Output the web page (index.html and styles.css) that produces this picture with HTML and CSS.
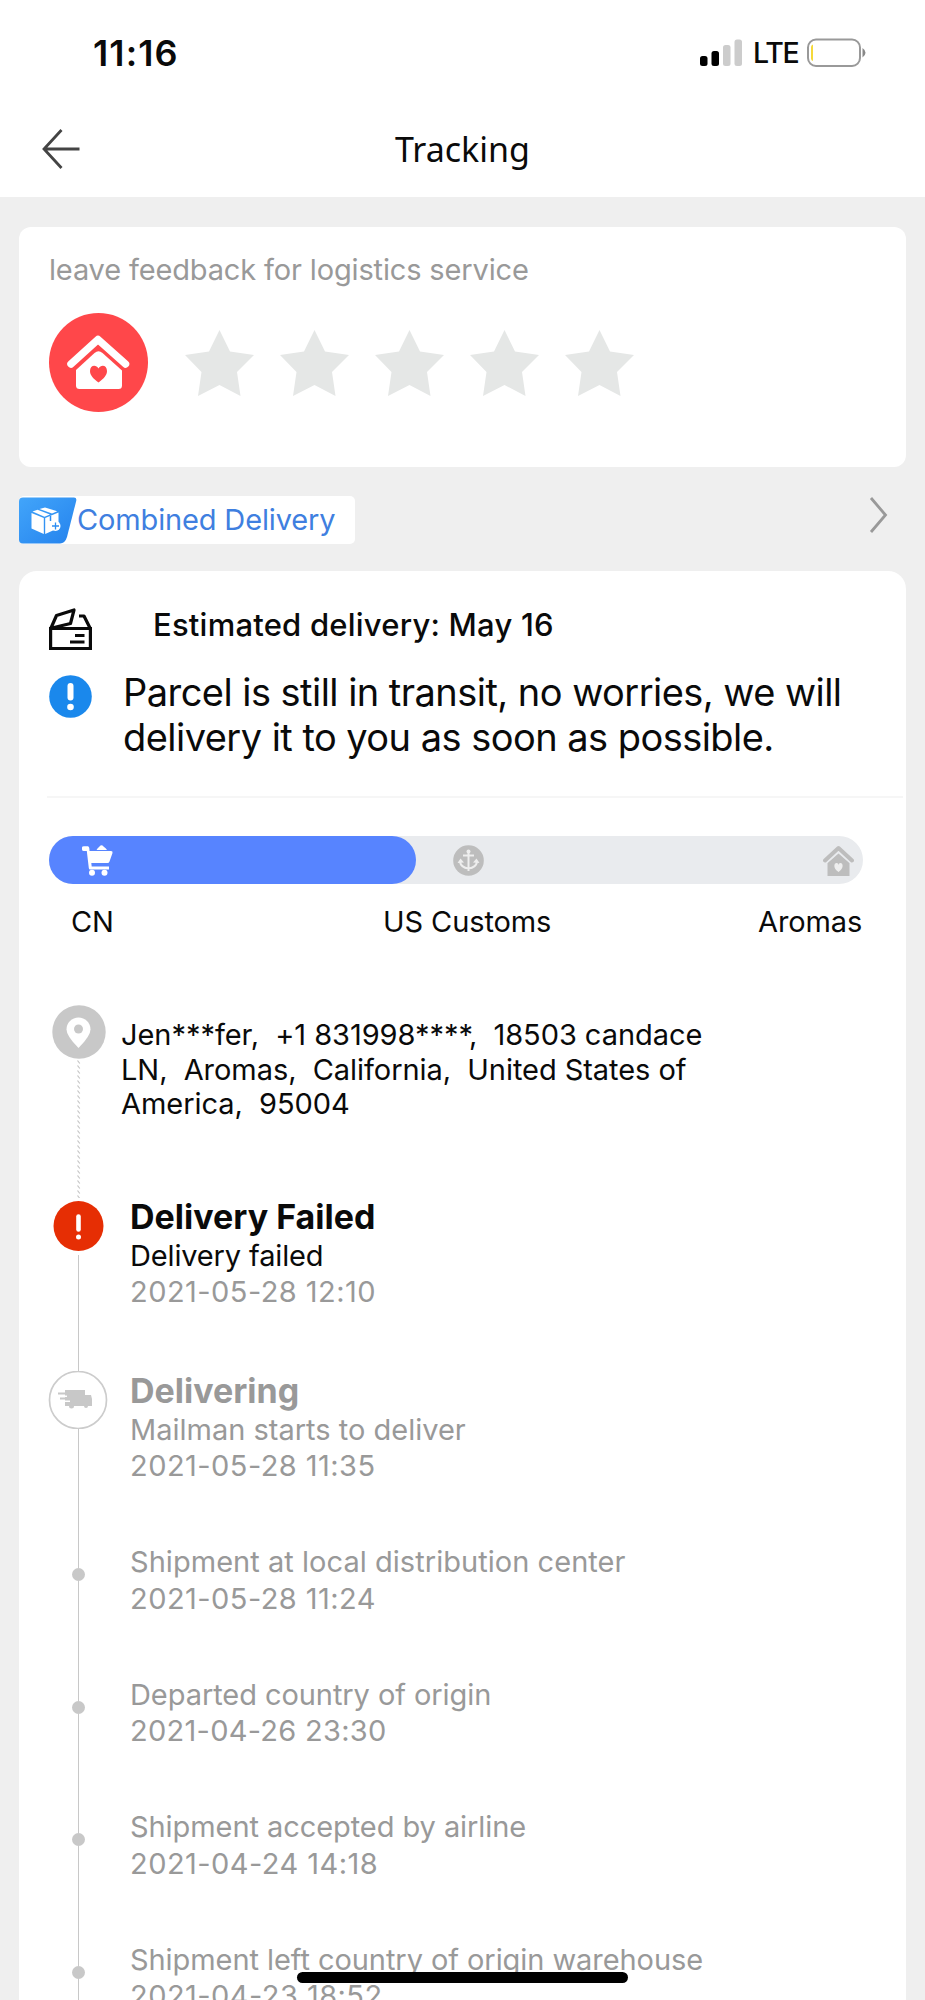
FILE: index.html
```html
<!DOCTYPE html>
<html lang="en">
<head>
<meta charset="utf-8">
<title>Tracking</title>
<link rel="stylesheet" href="styles.css">
</head>
<body>
<svg width="0" height="0" class="defs">
  <symbol id="star" viewBox="0 0 69 66"><path d="M34.500 0 45 21.500 69 25 52 42 55.500 66 34.500 55 13 66 16.500 42 0 25 24 21.500Z"/></symbol>
</svg>
<div class="screen">
  <header class="top">
    <div class="status">
      <span class="clock">11:16</span>
      <div class="signals">
        <svg width="43" height="28" viewBox="0 0 43 28"><rect x="0" y="17" width="7.500" height="10" rx="2.500"/><rect x="11.500" y="12" width="7.500" height="15" rx="2.500"/><g fill="#ccc"><rect x="23" y="6" width="7.500" height="21" rx="2.500"/><rect x="34.500" y="0.500" width="7.500" height="26.500" rx="2.500"/></g></svg>
        <span class="lte">LTE</span>
        <svg class="battery" width="59" height="30" viewBox="0 0 59 30"><rect x="1" y="1.500" width="52" height="26.500" rx="8" fill="none" stroke="#999" stroke-width="2"/><path d="M4 9Q4 7 6 6.500V23Q4 22.500 4 20.500Z" fill="#f5d93b"/><path d="M55.500 10Q58.500 12 58.500 14.750T55.500 19.500Z" fill="#888"/></svg>
      </div>
    </div>
    <div class="nav">
      <svg width="40" height="40" viewBox="0 0 40 40" fill="none" stroke="#444" stroke-width="2.800"><path d="M19.500 1 2 20 19.500 39M2 20H37.500"/></svg>
      <h1>Tracking</h1>
    </div>
  </header>

  <section class="card feedback">
    <p class="hint">leave feedback for logistics service</p>
    <div class="rating">
      <svg class="badge" width="99" height="99" viewBox="0 0 99 99"><circle cx="49.500" cy="49.500" r="49.500" fill="#ff474a"/><path d="M22 51 49 26.500 76.500 51" fill="none" stroke="#fff" stroke-width="7.500" stroke-linecap="round" stroke-linejoin="round"/><path d="M27 57 45.500 40Q49.500 36.500 53.500 40L73 57.500V72.500Q73 76 69.500 76H30.500Q27 76 27 72.500Z" fill="#fff"/><path d="M49.500 69.500C44 65.500 41 62 41 58C41 52 47 51 49.500 55.500C52 51 58 52 58 58C58 62 55 65.500 49.500 69.500Z" fill="#ff474a"/></svg>
      <svg class="star"><use href="#star"/></svg>
      <svg class="star"><use href="#star"/></svg>
      <svg class="star"><use href="#star"/></svg>
      <svg class="star"><use href="#star"/></svg>
      <svg class="star"><use href="#star"/></svg>
    </div>
  </section>

  <div class="combined">
    <div class="tag">
      <svg width="58" height="47" viewBox="0 0 58 47"><defs><linearGradient id="sky" x1="0" y1="0" x2="1" y2="1"><stop offset="0" stop-color="#42a5fa"/><stop offset="1" stop-color="#2482ed"/></linearGradient></defs><path d="M4 .5H55Q58 .5 57.200 4L48 40Q46 46.500 41 46.500H4Q0 46.500 0 42.500V4.500Q0 .5 4 .5Z" fill="url(#sky)"/><g fill="#fff"><path d="M12.500 16 24.800 21V37L12.500 31.500Z"/><path d="M26.200 21 39.500 15.500V31L26.200 37Z"/><path d="M13.500 14.500 18.500 12.800 31 17.600 25.500 19.800ZM20.500 12 26 10.500 38.300 14.200 33 16.600Z"/><circle cx="36.500" cy="29" r="5"/></g><path d="M31.500 19V24" stroke="#2c8df2" stroke-width="1.500"/><path d="M36.500 25.500V32.500M33 29H40" stroke="#2c8df2" stroke-width="1.300"/></svg>
      <span>Combined Delivery</span>
    </div>
    <svg class="chevron" width="20" height="38" viewBox="0 0 20 38" fill="none" stroke="#999" stroke-width="2.800"><path d="M2 2 16.500 19 2 36"/></svg>
  </div>

  <main class="card parcel">
    <div class="estimate">
      <svg width="43" height="43" viewBox="0 0 43 43" fill="none" stroke="#0a0a0a" stroke-width="3.200"><path d="M1.600 20.500H41.400V40.500H1.600Z"/><path d="M2 20 7.500 7.500 25 2 21.500 15.500 3 20M30 8H35L41 20M26 27.500H35.500M21 34H35.500" stroke-linejoin="round"/></svg>
      <h2>Estimated delivery: May 16</h2>
    </div>
    <div class="notice">
      <svg width="43" height="43" viewBox="0 0 43 43"><circle cx="21.500" cy="21.500" r="21.300" fill="#1a88ec"/><path d="M21.500 11V22.500" stroke="#fff" stroke-width="6" stroke-linecap="round"/><circle cx="21.500" cy="32" r="3.300" fill="#fff"/></svg>
      <p>Parcel is still in transit, no worries, we will<br>delivery it to you as soon as possible.</p>
    </div>
    <hr>
    <div class="progress">
      <div class="done"><svg width="31" height="31" viewBox="0 0 31 31" fill="#fff"><path d="M0 4.500V2.500Q0 1.200 2 1.200H6Q7.500 1.500 7.500 6H29Q31 6 30.500 8L27.500 16.500Q27 18 25.500 18H9.300L9.700 21.500H27V24.500H8Q7 24.500 6.800 23L4.800 6H2Q0 6 0 4.500Z"/><path d="M14.500 5Q15 3.500 17.500 1.500Q19.500-.8 21.500 1.500Q24.500 3.500 25 5Z"/><circle cx="10" cy="27.800" r="3"/><circle cx="22.500" cy="27.800" r="3"/></svg></div>
      <svg width="31" height="31" viewBox="0 0 31 31"><circle cx="15.500" cy="15.500" r="15.300" fill="#bdbdbd"/><g fill="none" stroke="#eee" stroke-width="2"><path d="M15.500 6V26M10 10.500H21M7 17Q8 22.500 15.500 23.500Q23 22.500 24 17"/></g><path d="M4.500 18 7.500 13.500 11 17.500ZM20 17.500 23.500 13.500 26.500 18Z" fill="#eee"/><circle cx="15.500" cy="6.500" r="2" fill="#eee"/></svg>
      <svg class="home" width="31" height="31" viewBox="0 0 31 31"><path d="M4.500 18 15.500 8.500 26.500 18V31H4.500Z" fill="#bdbdbd"/><path d="M2 15.500 15.500 3 29 15.500" fill="none" stroke="#e9ebee" stroke-width="7"/><path d="M2 15.500 15.500 3 29 15.500" fill="none" stroke="#bdbdbd" stroke-width="4" stroke-linecap="round" stroke-linejoin="round"/><path d="M15.500 27C9.500 23 11 17.500 14 18Q15.500 18.500 15.500 20Q15.500 18.500 17 18C20 17.500 21.500 23 15.500 27Z" fill="#eee"/></svg>
    </div>
    <div class="stops"><span>CN</span><span>US Customs</span><span>Aromas</span></div>

    <ol class="timeline">
      <li class="address">
        <div class="rail"><svg class="pin" width="54" height="54" viewBox="0 0 54 54"><circle cx="27" cy="27" r="26.700" fill="#c8c8c8"/><path d="M26.500 43Q14.500 31 14.500 24.500A12 12 0 0 1 38.500 24.500Q38.500 31 26.500 43Z" fill="#fff"/><circle cx="26.500" cy="24" r="4.500" fill="#c8c8c8"/></svg><svg class="dash" width="4" height="138" viewBox="0 0 4 138"><defs><pattern id="hatch" width="4" height="5" patternUnits="userSpaceOnUse"><path d="M.5 .5 2.800 3.500" stroke="#c4c4c4" stroke-width="1.200"/></pattern></defs><rect width="4" height="138" fill="url(#hatch)"/></svg></div>
        <div class="body"><p>Jen***fer,&nbsp; +1 831998****,&nbsp; 18503 candace</p><p>LN,&nbsp; Aromas,&nbsp; California,&nbsp; United States of</p><p>America,&nbsp; 95004</p></div>
      </li>
      <li class="failed">
        <div class="rail"><svg width="51" height="50" viewBox="0 0 51 50"><circle cx="25.500" cy="25" r="25" fill="#e62e04"/><path d="M25.500 15.500V28.500" stroke="#fff" stroke-width="4.600" stroke-linecap="round"/><circle cx="25.500" cy="36" r="2.500" fill="#fff"/></svg><i class="line"></i></div>
        <div class="body"><h3>Delivery Failed</h3><p class="snug">Delivery failed</p><time>2021-05-28 12:10</time></div>
      </li>
      <li class="delivering">
        <div class="rail"><svg width="60" height="58" viewBox="0 0 60 58"><circle cx="30" cy="29" r="28.500" fill="#fff" stroke="#ccc" stroke-width="1.700"/><path d="M17 19H37V24H43L44 28V35H40A2 2 0 0 1 36 35H26A2 2 0 0 1 21 35H17V31H22V29.500H17V26H19V24.500H17Z" fill="#c8c8c8"/><path d="M10 22.500H19M12 27.500H21" stroke="#c8c8c8" stroke-width="1.800"/></svg><i class="line"></i></div>
        <div class="body"><h3>Delivering</h3><p>Mailman starts to deliver</p><time>2021-05-28 11:35</time></div>
      </li>
      <li class="step"><div class="rail"><i class="lead"></i><i class="dot"></i><i class="line"></i></div><div class="body"><p class="wide">Shipment at local distribution center</p><time>2021-05-28 11:24</time></div></li>
      <li class="step"><div class="rail"><i class="lead"></i><i class="dot"></i><i class="line"></i></div><div class="body"><p class="tight">Departed country of origin</p><time class="even">2021-04-26 23:30</time></div></li>
      <li class="step"><div class="rail"><i class="lead"></i><i class="dot"></i><i class="line"></i></div><div class="body"><p class="tight">Shipment accepted by airline</p><time>2021-04-24 14:18</time></div></li>
      <li class="step"><div class="rail"><i class="lead"></i><i class="dot"></i><i class="line"></i></div><div class="body"><p class="tight">Shipment left country of origin warehouse</p><time>2021-04-23 18:52</time></div></li>
    </ol>
  </main>
  <div class="home-indicator"></div>
</div>
</body>
</html>
```
FILE: styles.css
```css
* { box-sizing: border-box; margin: 0; padding: 0; }
body { background: #efefef; }
svg { display: block; flex: none; }
.defs { position: absolute; }
.screen { position: relative; width: 925px; height: 2000px; overflow: hidden; background: #efefef; font: 400 29px/36px Inter, "Liberation Sans", sans-serif; color: #0a0a0a; white-space: nowrap; }
.top { height: 197px; background: #fff; }
.status { display: flex; justify-content: space-between; height: 105px; padding: 0 59px 0 93px; align-items: center; }
.clock { font-size: 36px; font-weight: 600; letter-spacing: 1.1px; }
.signals { display: flex; align-items: center; }
.lte { margin-left: 10px; width: 54px; font-size: 28.5px; font-weight: 500; letter-spacing: -1.3px; padding-top: 1px; }
.nav { display: grid; grid-template-columns: 1fr auto 1fr; align-items: center; height: 88px; padding: 0 42px; }
h1 { font: 400 34px/48px "Noto Sans", sans-serif; }
.card { margin-left: 19px; width: 887px; background: #fff; }
.feedback { height: 240px; margin-top: 30px; border-radius: 12px; padding: 25px 30px; color: #999; }
.hint { letter-spacing: -0.15px; }
.rating { display: flex; align-items: center; margin-top: 25px; }
.badge { margin-right: 37px; }
.star { width: 69px; height: 66px; margin-right: 26px; fill: #e5e7e6; }
.combined { display: flex; justify-content: space-between; align-items: flex-start; height: 104px; padding: 29px 36px 0 19px; }
.tag { display: flex; align-items: center; width: 336px; height: 48px; border-radius: 5px; background: #fff; color: #3f7fe0; }
.tag span { letter-spacing: -0.15px; }
.parcel { height: 1500px; border-radius: 18px 18px 0 0; }
.estimate { display: flex; padding: 37px 0 0 30px; height: 104px; }
h2 { font-size: 31px; font-weight: 500; line-height: 36px; letter-spacing: 0.22px; margin: -1px 0 0 61px; }
.notice { display: flex; padding-left: 30px; height: 121px; }
.notice p { font-size: 38px; line-height: 45px; letter-spacing: -0.54px; margin: -5px 0 0 31px; }
hr { border: 0; height: 2px; margin: 0 3px 0 28px; background: #f6f6f6; }
.progress { display: flex; align-items: center; width: 814px; height: 48px; margin: 38px 0 0 30px; border-radius: 24px; background: #e9ebee; }
.done { display: flex; align-items: center; width: 367px; height: 48px; margin-right: 37px; padding-left: 33px; border-radius: 24px; background: #5784ff; }
.home { margin: 0 9px 0 auto; }
.stops { display: grid; grid-template-columns: 312px 375px auto; height: 121px; padding: 20px 0 0 52px; letter-spacing: -0.1px; }
.timeline { list-style: none; margin-left: 29px; }
li { display: flex; }
.rail { display: flex; flex-direction: column; align-items: center; width: 60px; flex: none; }
.line, .lead { width: 1px; margin-left: 1px; background: #c8c8c8; }
.line { flex: 1; }
.pin { margin-left: 1px; }
.dash { margin: 1px 0 0 2px; }
.lead { height: 25px; }
.dot { width: 13px; height: 13px; margin-left: 1px; border-radius: 50%; background: #c8c8c8; }
.body { padding-left: 22px; line-height: 36.5px; color: #999; }
.address { height: 196px; }
.address .body { padding: 13px 0 0 13px; line-height: 34.5px; letter-spacing: -0.05px; color: #0a0a0a; }
.failed { height: 170px; }
.failed .body { margin-top: -3px; }
.failed .line { margin-top: 4px; }
.failed h3, .failed p { color: #0a0a0a; }
.snug { letter-spacing: -0.15px; }
.delivering { height: 172px; }
.delivering .body { padding-top: 1px; }
h3 { font-size: 34px; font-weight: 700; line-height: 38px; margin-bottom: 1.5px; }
time { display: block; letter-spacing: 0.45px; }
.even { letter-spacing: 0.27px; }
.wide { letter-spacing: 0.04px; }
.tight { letter-spacing: -0.07px; }
.step { height: 132.5px; }
.step .body { padding-top: 1px; }
.home-indicator { position: absolute; left: 297px; top: 1972px; width: 331px; height: 11px; border-radius: 6px; background: #000; }
```
